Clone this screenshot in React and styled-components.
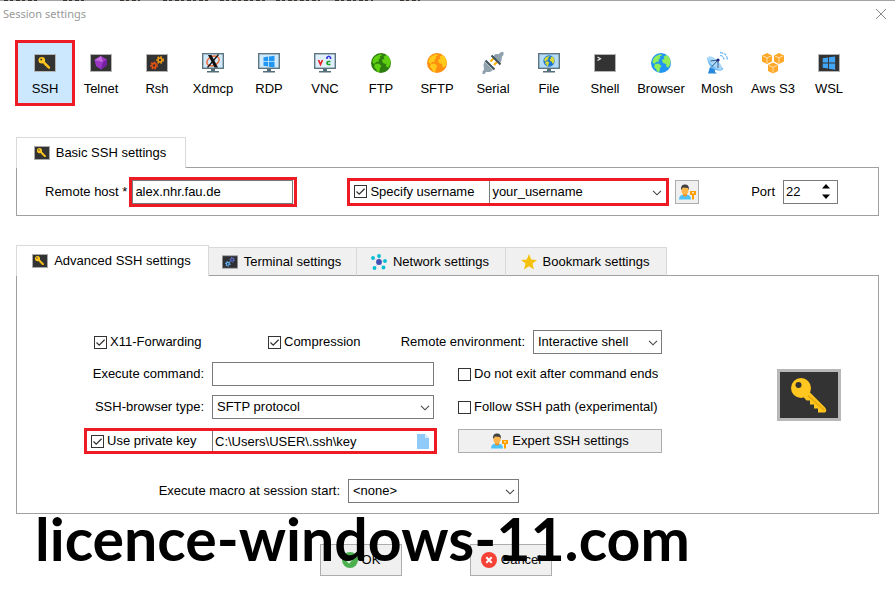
import React from 'react'
import styled, { createGlobalStyle, css } from 'styled-components'

const GlobalStyle = createGlobalStyle`
	* {
		box-sizing: border-box;
	}
	body {
		margin: 0;
		background: #fff;
		color: #000;
		font: 13px/16px "Liberation Sans", Arial, sans-serif;
	}
	button, input, select {
		font: inherit;
		color: inherit;
	}
	svg {
		display: block;
		flex: none;
	}
`

/* ---------- layout ---------- */

const Window = styled.main`
	position: relative;
	overflow: hidden;
	min-height: 100vh;
`

const MenuEdge = styled.div`
	height: 1px;
	overflow: hidden;
	background: #a3a3a3;
`

const TitleBar = styled.header`
	display: flex;
	justify-content: space-between;
	align-items: center;
	height: 25px;
	padding: 0 8px 0 3px;
`

const Title = styled.h1`
	margin: 0;
	color: #999;
	font: 12px/16px "Noto Sans", "Open Sans", sans-serif;
	font-size: 11px;
`

const CloseButton = styled.button`
	padding: 0;
	border: 0;
	background: none;
`

const SessionBar = styled.nav`
	display: flex;
	padding: 16px 17px 33px;
`

const SessionButton = styled.button`
	display: flex;
	flex-direction: column;
	align-items: center;
	gap: 7px;
	width: 56px;
	height: 62px;
	padding: 10px 0 0;
	border: 0;
	background: none;
	white-space: nowrap;
	${({ $active }) => $active && css`
		background: #cce8ff;
		outline: 3px solid #ed1c24;
		outline-offset: -1px;
	`}
`

const Section = styled.section`
	margin: 0 16px 29px;
`

const Tabs = styled.div`
	display: flex;
	align-items: flex-end;
	height: 31px;
	margin-bottom: -1px;
`

const Tab = styled.button`
	position: relative;
	display: flex;
	align-items: center;
	justify-content: center;
	gap: 6px;
	width: ${({ $width }) => $width}px;
	height: 29px;
	padding: 0 2px 0 0;
	border: 1px solid #d9d9d9;
	border-left-width: 0;
	border-bottom-color: #a0a0a0;
	background: #f0f0f0;
	white-space: nowrap;
	${({ $active }) => $active && css`
		height: 31px;
		border-left-width: 1px;
		border-bottom: 0;
		background: #fff;
	`}
`

const Panel = styled.div`
	border: 1px solid #a0a0a0;
`

const BasicPanel = styled(Panel)`
	display: flex;
	align-items: center;
	gap: 50px;
	height: 49px;
	padding: 0 40px 0 28px;
`

const AdvancedPanel = styled(Panel)`
	display: flex;
	justify-content: space-between;
	align-items: flex-start;
	padding: 54px 37px 10px 67px;
`

const Group = styled.div`
	display: flex;
	align-items: center;
	gap: ${({ $gap }) => $gap || 0}px;
	white-space: nowrap;
`

const PortGroup = styled(Group)`
	margin-left: auto;
`

const Form = styled.div`
	display: flex;
	flex-direction: column;
	gap: 8px;
	width: 578px;
`

const OptionRow = styled.div`
	display: grid;
	grid-template-columns: 174px 1fr auto;
	align-items: center;
	padding-left: 10px;
`

const Fields = styled.div`
	display: grid;
	grid-template-columns: 353px 1fr;
	column-gap: 21px;
	row-gap: 9px;
	align-items: center;
`

const Field = styled.div`
	display: grid;
	grid-template-columns: 120px 222px;
	column-gap: 8px;
	align-items: center;
`

const FieldLabel = styled.label`
	text-align: right;
	white-space: nowrap;
`

const MacroRow = styled(Group)`
	margin-top: 17px;
	padding-right: 143px;
	justify-content: flex-end;
`

const Picture = styled.div`
	margin-top: 39px;
`

const Footer = styled.footer`
	position: relative;
	display: flex;
	justify-content: center;
	gap: 68px;
	padding: 1px 23px 0 0;
`

const Watermark = styled.div`
	position: absolute;
	left: 35px;
	bottom: 1px;
	color: #000;
	font: 700 59px/72px Lato, sans-serif;
	white-space: nowrap;
	pointer-events: none;
`

/* ---------- controls ---------- */

const Highlight = styled.div`
	display: flex;
	align-items: center;
	border: 3px solid #ed1c24;
	white-space: nowrap;
`

const TextInput = styled.input`
	width: 100%;
	height: 24px;
	padding: 0 2px;
	border: 1px solid #7a7a7a;
	border-radius: 0;
	background: #fff;
	outline: 0;
`

const HostBox = styled(Highlight)`
	width: 168px;
	padding-right: 1px;
`

const UserBox = styled(Highlight)`
	width: 322px;
	height: 28px;
	padding-left: 4px;
`

const KeyBox = styled(Highlight)`
	height: 26px;
	padding-left: 4px;
`

const Inset = styled.div`
	display: flex;
	align-items: center;
	align-self: stretch;
	flex: 1;
	margin-left: auto;
	padding-right: ${({ $right }) => $right || 0}px;
	border-left: 1px solid #7a7a7a;
`

const BareInput = styled(TextInput)`
	height: 18px;
	border: 0;
`

const CheckLabel = styled.label`
	display: flex;
	align-items: center;
	gap: 3px;
	width: ${({ $width }) => ($width ? `${$width}px` : 'auto')};
	white-space: nowrap;
`

const CheckBox = styled.input.attrs({ type: 'checkbox' })`
	appearance: none;
	flex: none;
	width: 13px;
	height: 13px;
	margin: 0;
	border: 1px solid #333;
	background: #fff;
	&:checked {
		background-image: url("data:image/svg+xml,%3Csvg xmlns='http://www.w3.org/2000/svg' viewBox='0 0 11 11'%3E%3Cpath d='M1.5 5.5l2.7 2.7L9.6 2.8' fill='none' stroke='%23333' stroke-width='1.3'/%3E%3C/svg%3E");
	}
`

const SelectBox = styled.div`
	position: relative;
	width: ${({ $width }) => ($width ? `${$width}px` : '100%')};
	svg {
		position: absolute;
		right: 4px;
		top: 50%;
		margin-top: -2px;
		pointer-events: none;
	}
`

const StyledSelect = styled.select`
	appearance: none;
	display: block;
	width: 100%;
	height: ${({ $bare }) => ($bare ? 22 : 24)}px;
	padding: 0 18px 0 ${({ $bare }) => ($bare ? 2 : 4)}px;
	border: ${({ $bare }) => ($bare ? '0' : '1px solid #7a7a7a')};
	border-radius: 0;
	background: #fff;
	outline: 0;
`

const PushButton = styled.button`
	display: flex;
	align-items: center;
	justify-content: center;
	gap: 4px;
	width: ${({ $width }) => ($width ? `${$width}px` : '100%')};
	height: ${({ $height }) => $height || 24}px;
	padding: 0;
	border: 1px solid #adadad;
	background: #f0f0f0;
	white-space: nowrap;
`

const NumberBox = styled.div`
	display: flex;
	align-items: center;
	width: 55px;
	height: 24px;
	padding-right: 7px;
	border: 1px solid #7a7a7a;
`

const NumberInput = styled(BareInput).attrs({ type: 'number' })`
	flex: 1;
	min-width: 0;
	appearance: textfield;
	&::-webkit-inner-spin-button {
		appearance: none;
	}
`

const Steps = styled.div`
	display: flex;
	flex-direction: column;
	gap: 5px;
`

const StepButton = styled.button`
	display: block;
	padding: 0;
	border: 0;
	background: none;
`

/* ---------- icons ---------- */

const Chevron = () => (
	<svg width="10" height="6" viewBox="0 0 10 6">
		<path d="M1 .8l4 4 4-4" fill="none" stroke="#444" strokeWidth="1.1" />
	</svg>
)

const KeyShape = () => (
	<g>
		<path d="M31 21.500L48 38.500q2.500 3 0 5h-7v-4h-4v-4h-4v-4h-3.500L26.500 28z" fill="#ffc71f" />
		<path d="M31 26.500l16.500 15" stroke="#eead0e" strokeWidth="2" />
		<circle cx="24" cy="19" r="10" fill="#ffc71f" />
		<circle cx="21.500" cy="16" r="3" fill="#333" />
	</g>
)

const KeyIcon = ({ width, height, edge = 6 }) => (
	<svg width={width} height={height} viewBox="0 0 64 52" preserveAspectRatio="none">
		<rect width="64" height="52" fill="#b8b8b8" />
		<rect x={edge / 2} y={edge / 2} width={64 - edge} height={52 - edge} fill="#333" />
		<KeyShape />
	</svg>
)

const SmallKeyShape = () => (
	<g>
		<path d="M8.500 9l6.500 6.500" stroke="#ffc71f" strokeWidth="2.400" strokeLinecap="round" />
		<path d="M10 12l1 1.500h1.500V15H14v1h2" fill="none" stroke="#eeb112" />
		<circle cx="7.800" cy="8.300" r="3.300" fill="#ffc71f" />
		<circle cx="7.200" cy="7.500" r=".9" fill="#333" />
	</g>
)

const Terminal = ({ children }) => (
	<svg width="22" height="22" viewBox="0 0 22 22">
		<rect x=".5" y="2.500" width="21" height="17" fill="#333" stroke="#b5b5b5" />
		{children}
	</svg>
)

const KeyTabIcon = () => (
	<svg width="16" height="14" viewBox="0 0 16 14">
		<rect x=".5" y=".5" width="15" height="13" fill="#333" stroke="#aaa" />
		<g transform="translate(-.500 -1.800) scale(.77)">
			<SmallKeyShape />
		</g>
	</svg>
)

const Monitor = ({ children, fill = '#d0eafc' }) => (
	<svg width="22" height="22" viewBox="0 0 22 22">
		<path d="M9 16h4v3h4v1.500H5V19h4z" fill="#546e7a" />
		<rect x=".7" y="1.700" width="20.600" height="14.600" fill={fill} stroke="#5d7682" strokeWidth="1.400" />
		{children}
	</svg>
)

const Gear = ({ x, y, r, color }) => (
	<g fill="none" stroke={color}>
		<circle cx={x} cy={y} r={r} strokeWidth="1.600" />
		<circle cx={x} cy={y} r={r + 1.2} strokeWidth="1.400" strokeDasharray="1.500 1.500" />
	</g>
)

const Windows = ({ color }) => (
	<path d="M5.500 5.300l4.700-.7v4.600H5.500zM11 4.500l5.500-.8v5.500H11zM5.500 10h4.700v4.500l-4.700-.7zM11 10h5.500v5.500l-5.500-.8z" fill={color} />
)

const GlobeShape = ({ sea, land }) => (
	<g>
		<circle cx="11" cy="11" r="10" fill={sea} />
		<path d="M7 3.500L11 2l1 1.500-2.500 1 1 1.500-2 1.500.5 2-3 .5L4.500 12l-2-1.500C2.500 7 4.500 4.500 7 3.500zM5 12l3.500-.5 3 2.500-1.500 2-.5 3.500-2 .5-1.500-3-2-2zM13.500 4.500l3-1.500c3 2 4.500 5 4 8.500l-2 4-2-.5-.5-3-3-1-1-3 2.500-1.500z" fill={land} />
	</g>
)

const Globe = ({ sea, land }) => (
	<svg width="22" height="22" viewBox="0 0 22 22">
		<GlobeShape sea={sea} land={land} />
	</svg>
)

const TelnetIcon = () => (
	<Terminal>
		<path d="M11 4l6 3.500-.5 6L11 17.500 6 14 4.500 8z" fill="#9c36c4" />
		<path d="M11 4l2 6-8.500-2z" fill="#c36be0" />
		<path d="M13 10l4-2.500-.5 6L11 17.500z" fill="#7420a3" />
	</Terminal>
)

const RshIcon = () => (
	<Terminal>
		<Gear x={14} y={8} r={2} color="#f59a12" />
		<Gear x={8} y={13.5} r={2.1} color="#e85212" />
	</Terminal>
)

const XdmcpIcon = () => (
	<Monitor>
		<ellipse cx="11" cy="9" rx="6.500" ry="4.500" fill="none" stroke="#ef6c3b" strokeWidth="1.500" transform="rotate(-25 11 9)" />
		<path d="M6 3h3.500l6.500 12.500h-3.500z" fill="#111" />
		<path d="M16.500 2.500L5.500 15.500" stroke="#111" strokeWidth="1.200" />
	</Monitor>
)

const VncIcon = () => (
	<Monitor fill="#e0f0fb">
		<path d="M4.500 8l2 4.500 2-4.500" fill="none" stroke="#e8202a" strokeWidth="1.700" />
		<path d="M13 7V5.500q1.700-2.500 3.500 0V7" fill="none" stroke="#3030e0" strokeWidth="1.600" />
		<path d="M16.500 9.500h-2q-1.500 0-1.500 1.500t1.500 1.500h2" fill="none" stroke="#18a020" strokeWidth="1.700" />
	</Monitor>
)

const SerialIcon = () => (
	<svg width="22" height="22" viewBox="0 0 22 22">
		<path d="M8.500 9.500l3-3M12 13l3-3" stroke="#ffb300" strokeWidth="2" />
		<path d="M11 4.500l7 7 1.500-3 .5-4 1.500-1.500V0H19l-2 2h-3.500z" fill="#8fa2ad" />
		<path d="M2.500 9.500l8.500 8.500-3 2H4l-1.500 2H.5v-2.500L2 17.500 1.500 13z" fill="#8fa2ad" />
		<path d="M9.500 3.500l9 9M3.500 8.500l9 9" stroke="#3f525c" strokeWidth="2" />
	</svg>
)

const FileIcon = () => (
	<Monitor fill="#b4dcf8">
		<g transform="translate(4.800 2.800) scale(.57)">
			<GlobeShape sea="#1976d2" land="#d8d834" />
		</g>
	</Monitor>
)

const ShellIcon = () => (
	<Terminal>
		<path d="M3.500 5l3 1.800-3 1.800" fill="none" stroke="#eee" strokeWidth="1.200" />
	</Terminal>
)

const MoshIcon = () => (
	<svg width="22" height="22" viewBox="0 0 22 22">
		<path d="M4 15l5 2v3l2 1.500H2z" fill="#2687dc" />
		<path d="M1.500 5C.5 12 7 20 15 18.500c2-.5 2.500-1.500 2-2.500z" fill="#74bbf5" />
		<ellipse cx="9" cy="11" rx="9" ry="3.500" transform="rotate(43 9 11)" fill="#a9d8fb" />
		<path d="M4.500 9l7.500-1v8M5.500 15L12 8" fill="none" stroke="#345c88" />
		<circle cx="12" cy="8" r="1.600" fill="#1a237e" />
		<path d="M14 3.500q3.500 0 4 4M14 .7q7 0 7.300 7" fill="none" stroke="#64b5f6" strokeWidth="1.200" strokeDasharray="3 1" />
	</svg>
)

const Cube = ({ x, y }) => (
	<g transform={`translate(${x} ${y})`}>
		<path d="M0 2.500L5 0l5 2.500v6L5 11 0 8.500z" fill="#ffa726" />
		<path d="M1 3l4 1.800L9 3M5 4.800V10" fill="none" stroke="#ffe0b2" />
	</g>
)

const AwsIcon = () => (
	<svg width="22" height="22" viewBox="1 0 22 22">
		<Cube x={1} y={1} />
		<Cube x={13} y={1} />
		<Cube x={7} y={10.5} />
	</svg>
)

const WslIcon = () => (
	<Terminal>
		<g transform="translate(-1.500 .2) scale(1.130)">
			<Windows color="#42a5f5" />
		</g>
	</Terminal>
)

const TerminalTabIcon = () => (
	<svg width="16" height="14" viewBox="0 0 22 18">
		<rect x=".5" y=".5" width="21" height="17" fill="#2d2f33" stroke="#999" />
		<Gear x={14} y={6} r={2} color="#5c6bc0" />
		<Gear x={8} y={11.5} r={2} color="#64b5f6" />
	</svg>
)

const NetworkIcon = () => (
	<svg width="16" height="16" viewBox="0 0 16 16">
		<path d="M8 8V2M8 8l6-1M8 8L2.500 3.500M8 8l-4.500 6M8 8l4.500 5.500" stroke="#c3d5e6" />
		<circle cx="8" cy="8" r="2.900" fill="#3f51b5" />
		<g fill="#00bcd4">
			<circle cx="8" cy="2" r="1.900" />
			<circle cx="14" cy="7" r="1.900" />
			<circle cx="2" cy="4" r="1.900" />
			<circle cx="3.500" cy="14" r="1.900" />
			<circle cx="12.500" cy="13.500" r="1.900" />
		</g>
	</svg>
)

const StarIcon = () => (
	<svg width="16" height="16" viewBox="0 0 16 16">
		<path d="M8 0l2.200 5.500 5.800.4-4.500 3.700L13 15.500l-5-3.200-5 3.200 1.500-5.900L0 5.900l5.800-.4z" fill="#f4c20d" />
	</svg>
)

const UserKeyIcon = () => (
	<svg width="17" height="16" viewBox="0 0 17 16">
		<path d="M0 15.500c0-4 2.500-5 6-5s6 1 6 5z" fill="#4fc3f7" />
		<path d="M4 9h4v2.500q-2 2-4 0z" fill="#f09020" />
		<ellipse cx="6" cy="6" rx="3.600" ry="4.500" fill="#ffb74d" />
		<path d="M2.200 6C1.500 1.500 4 .5 6 .5S10.500 1.500 9.800 6L8.800 4 4 3.500z" fill="#424242" />
		<path d="M11 7h6v4h-2v4.500h-2V11h-2z" fill="#ffa000" />
		<rect x="13" y="8.200" width="2" height="1.200" fill="#fff3e0" />
	</svg>
)

const DocumentIcon = () => (
	<svg width="12" height="15" viewBox="0 0 12 15">
		<path d="M0 0h8l4 4v11H0z" fill="#90caf9" />
		<path d="M8 0v4h4z" fill="#dceefb" />
	</svg>
)

const OkIcon = () => (
	<svg width="16" height="16" viewBox="0 0 16 16">
		<circle cx="8" cy="8" r="8" fill="#4caf50" />
		<path d="M4.500 8l2.500 2.500 4.500-5" fill="none" stroke="#dff5d8" strokeWidth="1.700" />
	</svg>
)

const CancelIcon = () => (
	<svg width="16" height="16" viewBox="0 0 16 16">
		<circle cx="8" cy="8" r="8" fill="#f44336" />
		<path d="M5.300 5.300l5.400 5.400M10.700 5.300l-5.400 5.400" stroke="#fff" strokeWidth="2" />
	</svg>
)

/* ---------- page ---------- */

const sessions = [
	{ name: 'SSH', icon: <Terminal><SmallKeyShape /></Terminal> },
	{ name: 'Telnet', icon: <TelnetIcon /> },
	{ name: 'Rsh', icon: <RshIcon /> },
	{ name: 'Xdmcp', icon: <XdmcpIcon /> },
	{ name: 'RDP', icon: <Monitor><Windows color="#2196f3" /></Monitor> },
	{ name: 'VNC', icon: <VncIcon /> },
	{ name: 'FTP', icon: <Globe sea="#2e7d0f" land="#5fd010" /> },
	{ name: 'SFTP', icon: <Globe sea="#ff8f0f" land="#ffca1a" /> },
	{ name: 'Serial', icon: <SerialIcon /> },
	{ name: 'File', icon: <FileIcon /> },
	{ name: 'Shell', icon: <ShellIcon /> },
	{ name: 'Browser', icon: <Globe sea="#2196f3" land="#8fee5a" /> },
	{ name: 'Mosh', icon: <MoshIcon /> },
	{ name: 'Aws S3', icon: <AwsIcon /> },
	{ name: 'WSL', icon: <WslIcon /> }
]

// bottom edge of the menu labels behind the dialog: [start, end]
const menuMarks = [[4, 38], [63, 84], [120, 140], [163, 208], [220, 265], [276, 320], [335, 373], [400, 420]]

const Check = ({ label, checked, width }) => (
	<CheckLabel $width={width}>
		<CheckBox defaultChecked={checked} />
		{label}
	</CheckLabel>
)

const Select = ({ id, value, width, bare, label }) => (
	<SelectBox $width={width}>
		<StyledSelect id={id} $bare={bare} aria-label={label} defaultValue={value}>
			<option>{value}</option>
		</StyledSelect>
		<Chevron />
	</SelectBox>
)

const App = () => (
	<Window>
		<GlobalStyle />
		<MenuEdge>
			<svg width="430" height="1">
				{menuMarks.map(([from, to]) => (
					<path key={from} d={`M${from} .5H${to}`} stroke="#3c3530" strokeDasharray="4 2 3 3" />
				))}
			</svg>
		</MenuEdge>
		<TitleBar>
			<Title>Session settings</Title>
			<CloseButton aria-label="Close">
				<svg width="12" height="12" viewBox="0 0 12 12">
					<path d="M1 1l10 10M11 1L1 11" stroke="#888" />
				</svg>
			</CloseButton>
		</TitleBar>

		<SessionBar>
			{sessions.map(({ name, icon }) => (
				<SessionButton key={name} $active={name === 'SSH'}>
					{icon}
					{name}
				</SessionButton>
			))}
		</SessionBar>

		<Section>
			<Tabs>
				<Tab $active $width={170}>
					<KeyTabIcon />
					Basic SSH settings
				</Tab>
			</Tabs>
			<BasicPanel>
				<Group $gap={2}>
					<label htmlFor="host">Remote host *</label>
					<HostBox>
						<TextInput id="host" defaultValue="alex.nhr.fau.de" />
					</HostBox>
				</Group>
				<Group $gap={6}>
					<UserBox>
						<Check label="Specify username" checked width={135} />
						<Inset>
							<Select bare label="Username" value="your_username" />
						</Inset>
					</UserBox>
					<PushButton $width={24} aria-label="Manage users">
						<UserKeyIcon />
					</PushButton>
				</Group>
				<PortGroup $gap={8}>
					<label htmlFor="port">Port</label>
					<NumberBox>
						<NumberInput id="port" defaultValue="22" />
						<Steps>
							<StepButton aria-label="Increase">
								<svg width="8" height="5" viewBox="0 0 8 5"><path d="M4 0l4 4.500H0z" /></svg>
							</StepButton>
							<StepButton aria-label="Decrease">
								<svg width="8" height="5" viewBox="0 0 8 5"><path d="M4 5l4-4.500H0z" /></svg>
							</StepButton>
						</Steps>
					</NumberBox>
				</PortGroup>
			</BasicPanel>
		</Section>

		<Section>
			<Tabs>
				<Tab $active $width={193}>
					<KeyTabIcon />
					Advanced SSH settings
				</Tab>
				<Tab $width={148}>
					<TerminalTabIcon />
					Terminal settings
				</Tab>
				<Tab $width={149}>
					<NetworkIcon />
					Network settings
				</Tab>
				<Tab $width={161}>
					<StarIcon />
					Bookmark settings
				</Tab>
			</Tabs>
			<AdvancedPanel>
				<Form>
					<OptionRow>
						<Check label="X11-Forwarding" checked />
						<Check label="Compression" checked />
						<Group $gap={8}>
							<label htmlFor="environment">Remote environment:</label>
							<Select id="environment" value="Interactive shell" width={129} />
						</Group>
					</OptionRow>
					<Fields>
						<Field>
							<FieldLabel htmlFor="command">Execute command:</FieldLabel>
							<TextInput id="command" />
						</Field>
						<Check label="Do not exit after command ends" />
						<Field>
							<FieldLabel htmlFor="browser">SSH-browser type:</FieldLabel>
							<Select id="browser" value="SFTP protocol" />
						</Field>
						<Check label="Follow SSH path (experimental)" />
						<KeyBox>
							<Check label="Use private key" checked width={121} />
							<Inset $right={5}>
								<BareInput aria-label="Private key path" defaultValue="C:\Users\USER\.ssh\key" />
								<DocumentIcon />
							</Inset>
						</KeyBox>
						<PushButton>
							<UserKeyIcon />
							Expert SSH settings
						</PushButton>
					</Fields>
					<MacroRow $gap={8}>
						<label htmlFor="macro">Execute macro at session start:</label>
						<Select id="macro" value="<none>" width={171} />
					</MacroRow>
				</Form>
				<Picture>
					<KeyIcon width={64} height={52} />
				</Picture>
			</AdvancedPanel>
		</Section>

		<Footer>
			<PushButton $width={82} $height={32}>
				<OkIcon />
				OK
			</PushButton>
			<PushButton $width={82} $height={32}>
				<CancelIcon />
				Cancel
			</PushButton>
			<Watermark>licence-windows-11.com</Watermark>
		</Footer>
	</Window>
)

export default App
